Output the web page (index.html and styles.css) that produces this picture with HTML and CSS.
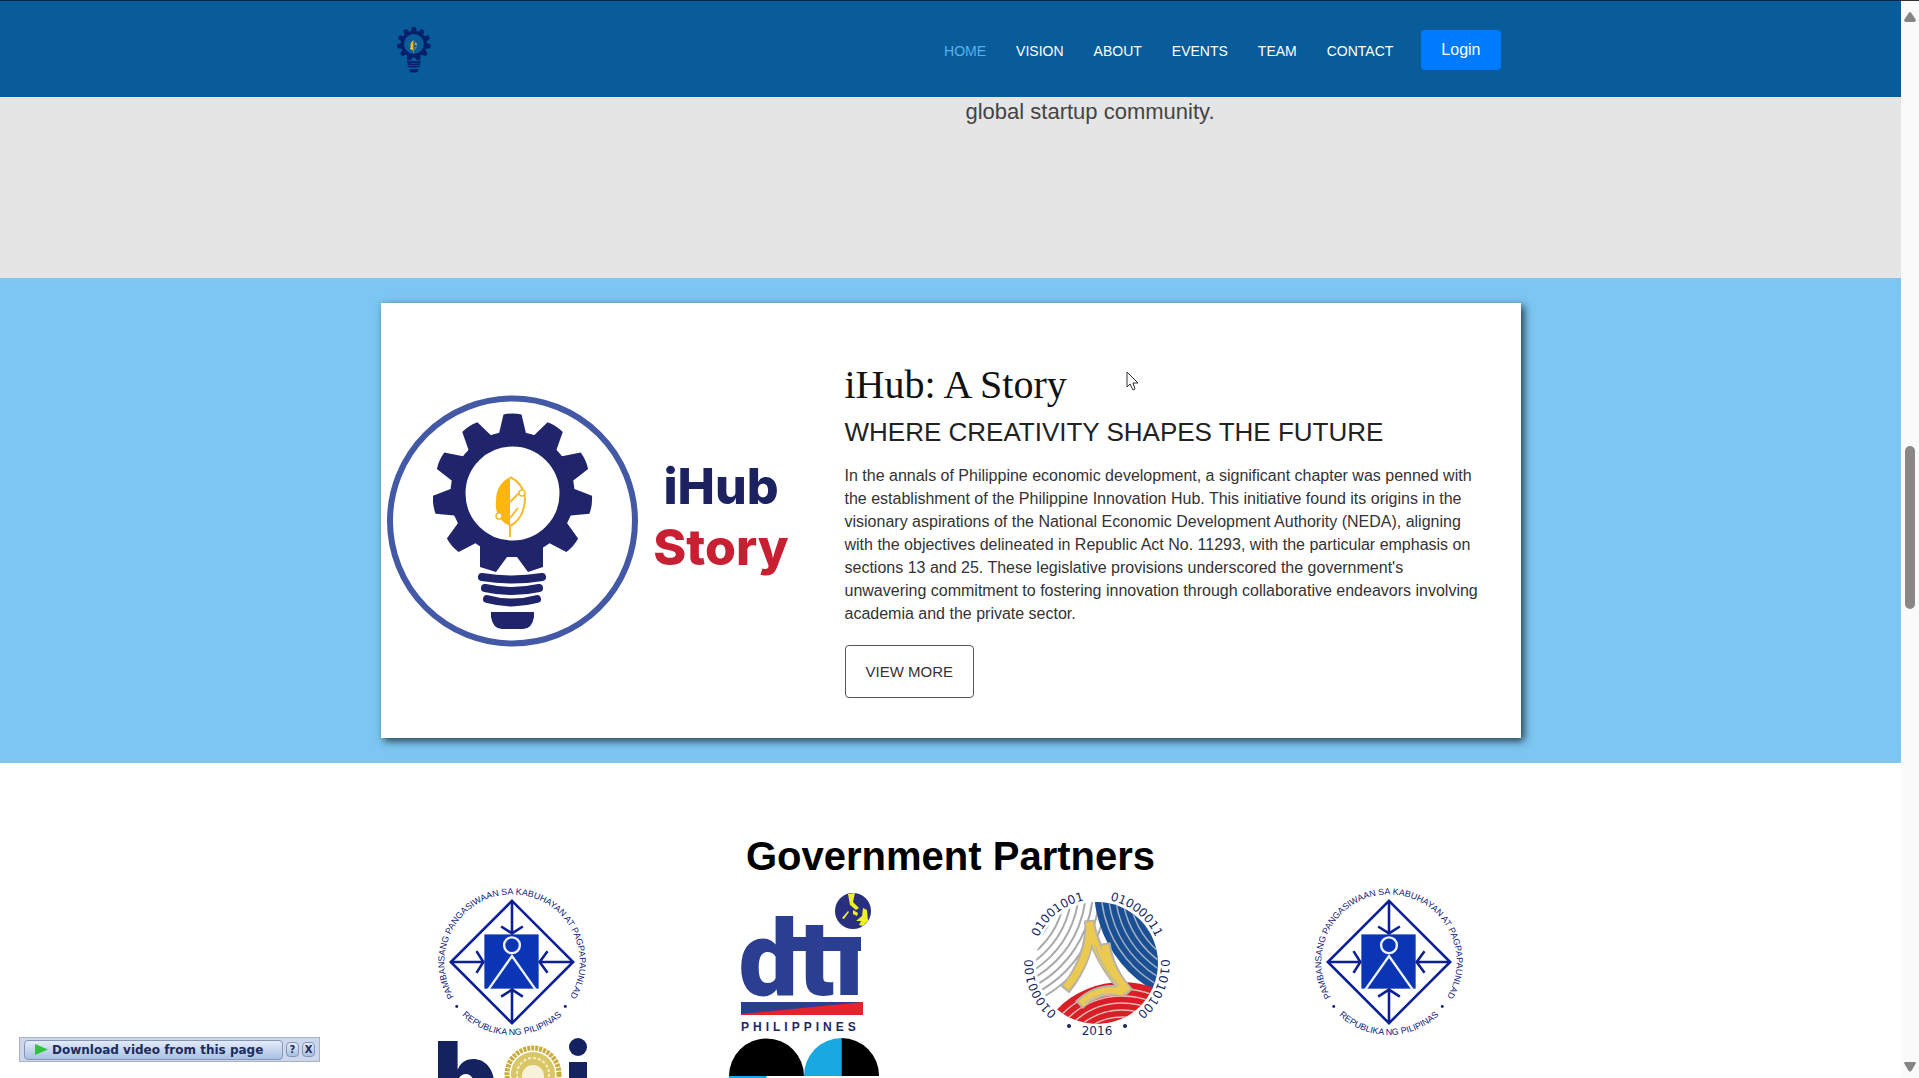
FILE: index.html
```html
<!DOCTYPE html>
<html lang="en">
<head>
<meta charset="utf-8">
<meta name="viewport" content="width=device-width, initial-scale=1">
<title>iHub</title>
<link rel="stylesheet" href="styles.css">
</head>
<body>
<svg class="defs" aria-hidden="true">
  <defs>
    <g id="tooth"><path d="M-14-58L-9-79Q0-81 9-79L14-58Z"/></g>
    <symbol id="bulb" viewBox="52 22 160 218">
      <g fill="currentColor">
        <g transform="translate(131.5 102.500)">
          <use href="#tooth"/>
          <use href="#tooth" transform="rotate(32.7)"/>
          <use href="#tooth" transform="rotate(65.5)"/>
          <use href="#tooth" transform="rotate(98.200)"/>
          <use href="#tooth" transform="rotate(130.900)"/>
          <use href="#tooth" transform="rotate(-32.7)"/>
          <use href="#tooth" transform="rotate(-65.5)"/>
          <use href="#tooth" transform="rotate(-98.200)"/>
          <use href="#tooth" transform="rotate(-130.900)"/>
          <circle r="54.500" fill="none" stroke="currentColor" stroke-width="15"/>
        </g>
        <path d="M99 148Q131 160 162 148V176L147 181L136 166H126L115 181L99 176Z"/>
        <path d="M110 221H153V226Q151 238 142 238H121Q112 238 110 226Z"/>
      </g>
      <g fill="none" stroke="currentColor" stroke-width="8" stroke-linecap="round">
        <path d="M101 186Q131 191 161 186"/>
        <path d="M104 197Q131 203 158 197"/>
        <path d="M106 208Q131 215 156 208"/>
      </g>
      <path d="M129 86Q115 93 115 110Q113 128 129 135Z" fill="#fbb70c"/>
      <path d="M129 86Q143 93 144 108Q143 128 129 135V146M129 111L139 101M129 127L137 117" fill="none" stroke="#f2bd2c" stroke-width="2"/>
      <circle cx="141" cy="102" r="3" fill="#fff" stroke="#f2bd2c" stroke-width="1.500"/>
      <circle cx="118" cy="125" r="3" fill="#fff" stroke="#f2bd2c" stroke-width="1.500"/>
    </symbol>
    <path id="ring-top" d="M-39 56.300A68.500 68.500 0 1 1 39 56.300"/>
    <path id="ring-bottom" d="M-74 0A74 74 0 0 0 74 0"/>
    <path id="ring-bits" d="M-64 0A64 64 0 0 1 64 0"/>
    <symbol id="neda" viewBox="-76 -75 152 152">
      <g class="seal-text">
        <text><textPath href="#ring-top" startOffset="50%" text-anchor="middle">PAMBANSANG PANGASIWAAN SA KABUHAYAN AT PAGPAPAUNLAD</textPath></text>
        <text><textPath href="#ring-bottom" startOffset="50%" text-anchor="middle">REPUBLIKA NG PILIPINAS</textPath></text>
      </g>
      <circle cx="-56" cy="45" r="1.500" fill="#10207a"/>
      <circle cx="54" cy="45" r="1.500" fill="#10207a"/>
      <rect x="-28" y="-28" width="55" height="55" fill="#0a35b4"/>
      <g fill="none" stroke="#0c1f94" stroke-width="2.600">
        <path d="M0-62L62 0L0 62L-62 0Z"/>
        <path d="M0-62V-28M-11-36L0-29L11-36M0 62V28M-11 35L0 28L11 35M-62 0H-28M-36-11L-29 0L-36 11M62 0H28M36-11L28 0L36 11"/>
      </g>
      <g fill="none" stroke="#eef4ff" stroke-width="2.400">
        <circle cy="-17" r="8"/><path d="M-24 28L0-6L24 28"/>
      </g>
    </symbol>
    <clipPath id="disc"><circle r="61"/></clipPath>
    <clipPath id="disc-blue"><circle cx="115" cy="-75" r="118"/></clipPath>
    <clipPath id="disc-red"><circle cx="25" cy="110" r="91"/></clipPath>
  </defs>
</svg>

<div class="page">
  <header class="header">
    <div class="header-inner">
      <a href="#" class="brand" aria-label="iHub"><svg class="brand-icon"><use href="#bulb"/></svg></a>
      <nav class="nav">
        <a href="#" class="active">HOME</a>
        <a href="#">VISION</a>
        <a href="#">ABOUT</a>
        <a href="#">EVENTS</a>
        <a href="#">TEAM</a>
        <a href="#">CONTACT</a>
      </nav>
      <button class="login" type="button">Login</button>
    </div>
  </header>

  <section class="intro">
    <div class="intro-inner"><p>global startup community.</p></div>
  </section>

  <section class="story">
    <article class="card">
      <svg class="story-art" viewBox="0 0 444 260" role="img" aria-label="iHub Story">
        <circle cx="131.500" cy="130" r="122.500" fill="none" stroke="#4459a5" stroke-width="6"/>
        <svg x="52" y="22" width="160" height="218"><use href="#bulb"/></svg>
        <text x="340" y="113" class="art-hub">iHub</text>
        <text x="340" y="174" class="art-story">Story</text>
      </svg>
      <div class="card-body">
        <h2>iHub: A Story</h2>
        <h3>WHERE CREATIVITY SHAPES THE FUTURE</h3>
        <p>In the annals of Philippine economic development, a significant chapter was penned with the establishment of the Philippine Innovation Hub. This initiative found its origins in the visionary aspirations of the National Economic Development Authority (NEDA), aligning with the objectives delineated in Republic Act No. 11293, with the particular emphasis on sections 13 and 25. These legislative provisions underscored the government's unwavering commitment to fostering innovation through collaborative endeavors involving academia and the private sector.</p>
        <button class="more" type="button">VIEW MORE</button>
      </div>
    </article>
  </section>

  <section class="partners">
    <h2>Government Partners</h2>
    <div class="logos">
      <svg><use href="#neda"/></svg>
      <svg viewBox="0 0 150 150">
        <text x="72" y="107" class="dti">dti</text>
        <rect x="100" y="22" width="40" height="27" fill="#fff"/>
        <rect x="60" y="49" width="72" height="14" fill="#2a3f92"/>
        <circle cx="124" cy="23" r="18" fill="#28307e"/>
        <path d="M119 6L126 5L124 14L130 20L127 22L121 17ZM113 30L119 23L120 24L115 31ZM124 22L129 25L128 28L124 26ZM134 20L138 22L139 33L134 38L130 37L132 33L127 33L133 28Z" fill="#eef02c"/>
        <path d="M12 114H134V127H12Z" fill="#e8222c"/>
        <path d="M12 114H134L12 126Z" fill="#2a3f92"/>
        <text x="12" y="143" class="dti-sub">PHILIPPINES</text>
      </svg>
      <svg viewBox="-75 -75 150 150">
        <g clip-path="url(#disc)" fill="none">
          <g stroke="#a9a9ad" stroke-width="2">
            <circle cx="-115" cy="-75" r="62"/><circle cx="-115" cy="-75" r="69"/><circle cx="-115" cy="-75" r="76"/><circle cx="-115" cy="-75" r="83"/><circle cx="-115" cy="-75" r="90"/><circle cx="-115" cy="-75" r="97"/><circle cx="-115" cy="-75" r="104"/><circle cx="-115" cy="-75" r="111"/><circle cx="-115" cy="-75" r="118"/><circle cx="-115" cy="-75" r="125"/>
          </g>
          <g clip-path="url(#disc-blue)">
            <rect x="-62" y="-62" width="124" height="124" fill="#1a4f94"/>
            <g stroke="#9db0c4" stroke-width="1.500">
              <circle cx="115" cy="-75" r="62"/><circle cx="115" cy="-75" r="69"/><circle cx="115" cy="-75" r="76"/><circle cx="115" cy="-75" r="83"/><circle cx="115" cy="-75" r="90"/><circle cx="115" cy="-75" r="97"/><circle cx="115" cy="-75" r="104"/><circle cx="115" cy="-75" r="111"/>
            </g>
          </g>
          <g clip-path="url(#disc-red)">
            <rect x="-62" y="-62" width="124" height="124" fill="#d81e26"/>
            <g stroke="#e9b9b4" stroke-width="1.500">
              <circle cx="25" cy="110" r="84"/><circle cx="25" cy="110" r="77"/><circle cx="25" cy="110" r="70"/><circle cx="25" cy="110" r="63"/><circle cx="25" cy="110" r="56"/>
            </g>
          </g>
          <g stroke="#b7b3a6" stroke-width="11"><path d="M-7-43Q-6-5-32 27M-8-42Q0-2 31 30M8-20Q12 8 32 30M-18 42Q0 24 28 28"/></g>
          <g stroke="#ecc94f" stroke-width="7"><path d="M-7-41Q-6-5-31 25M-8-41Q0-2 29 28M8-18Q12 8 31 28M-16 41Q0 24 27 29"/></g>
          <path d="M-2-18Q4 4 22 23M-13 40Q2 29 18 31" stroke="#c4bca2" stroke-width="1.500"/>
        </g>
        <g class="bits">
          <text transform="rotate(-39)"><textPath href="#ring-bits" startOffset="50%" text-anchor="middle">01001001</textPath></text>
          <text transform="rotate(39)"><textPath href="#ring-bits" startOffset="50%" text-anchor="middle">01000011</textPath></text>
          <text transform="rotate(114)"><textPath href="#ring-bits" startOffset="50%" text-anchor="middle">01010100</textPath></text>
          <text transform="rotate(-114)"><textPath href="#ring-bits" startOffset="50%" text-anchor="middle">01000100</textPath></text>
          <text y="72" text-anchor="middle">2016</text>
        </g>
        <circle cx="-28" cy="63" r="2" fill="#1b2450"/><circle cx="28" cy="63" r="2" fill="#1b2450"/>
      </svg>
      <svg><use href="#neda"/></svg>
      <svg viewBox="0 0 150 150">
        <text x="-4" y="76" class="boi">b</text>
        <circle cx="96" cy="36" r="26" fill="none" stroke="#c9ae3f" stroke-width="5" stroke-dasharray="3 1"/>
        <circle cx="96" cy="36" r="22" fill="#d9c667"/>
        <circle cx="96" cy="36" r="16" fill="none" stroke="#f6efc4" stroke-width="2" stroke-dasharray="3 2"/>
        <circle cx="96" cy="38" r="11" fill="#f7f3da"/>
        <circle cx="141" cy="9" r="9" fill="#14225f"/>
        <rect x="132" y="24" width="18" height="52" fill="#14225f"/>
      </svg>
      <svg viewBox="0 0 150 150">
        <path d="M0 38A37.500 37.500 0 0 1 75 38Z"/>
        <path d="M75 38A37.500 37.500 0 0 1 112.500 0V38Z" fill="#18a8e2"/>
        <path d="M112.500 0A37.500 37.500 0 0 1 150 38H112.500Z"/>
        <path d="M0 38H37.500V75A37.500 37.500 0 0 1 0 38Z" fill="#18a8e2"/>
      </svg>
    </div>
  </section>
</div>

<div class="scrollbar" aria-hidden="true">
  <svg class="arrow" viewBox="0 0 12 10"><path d="M6 0Q7 0 8 2L12 8Q12 10 10 10H2Q0 10 0 8L4 2Q5 0 6 0Z"/></svg>
  <div class="track"><div class="thumb"></div></div>
  <svg class="arrow" viewBox="0 0 12 10"><path d="M0 1Q0 0 2 0H10Q12 0 12 1L8 8Q6 11 4 8Z"/></svg>
</div>

<svg class="cursor" viewBox="0 0 14 20" aria-hidden="true"><path d="M1 1V16L4 13L7 19L9 18L7 12H12Z" fill="#fff" stroke="#333"/></svg>

<div class="grabber">
  <button type="button" class="grab-main"><svg viewBox="0 0 14 12"><path d="M0 0L14 6L0 12Z" fill="#2fc23c"/></svg>Download video from this page</button>
  <button type="button" class="grab-key">?</button>
  <button type="button" class="grab-key">X</button>
</div>
</body>
</html>
```
FILE: styles.css
```css
* { box-sizing: border-box; }
body {
  margin: 0;
  height: 100vh;
  display: flex;
  overflow: hidden;
  background: #fff;
  color: #222;
  font: 16px/23px "Liberation Sans", Arial, sans-serif;
}
h2, h3, p { margin: 0; }
button { font-family: inherit; }
.defs { position: absolute; width: 0; height: 0; }

.page { flex: 1; min-width: 0; overflow: hidden; }

.header {
  height: 97px;
  background: #085c9a;
  border-top: 1px solid #0c2348;
}
.header-inner {
  max-width: 1140px;
  height: 100%;
  margin: 0 auto;
  padding: 2px 20px 0 16px;
  display: flex;
  align-items: center;
}
.brand { margin-right: auto; color: #06206c; }
.brand-icon { display: block; width: 34px; height: 46px; }
.nav { display: flex; gap: 30px; margin-right: 28px; padding-top: 2px; }
.nav a { color: #fff; font-size: 14px; text-decoration: none; }
.nav .active { color: #5bb0ec; }
.login {
  height: 40px;
  padding: 0 20px;
  border: 0;
  border-radius: 4px;
  background: #007bff;
  color: #fff;
  font-size: 16px;
}

.intro { height: 181px; background: #e5e5e5; }
.intro-inner { max-width: 1140px; margin: 0 auto; padding-left: 585px; }
.intro p { font-size: 22px; line-height: 30px; color: #444; }

.story { padding: 25px 16px; background: #7cc6f2; }
.card {
  max-width: 1140px;
  margin: 0 auto;
  padding-right: 36px;
  display: grid;
  grid-template-columns: 444px 1fr;
  gap: 20px;
  align-items: center;
  background: #fff;
  box-shadow: 3px 3px 8px rgba(0, 0, 0, .7);
}
.story-art { display: block; width: 100%; color: #20246b; }
.art-hub, .art-story { font-family: Inter, sans-serif; font-size: 50px; font-weight: 800; text-anchor: middle; }
.art-hub { fill: #1c2260; }
.art-story { fill: #c81f33; }
.card-body { padding: 58px 0 40px; }
.card-body h2 { font: 40px/48px "Liberation Serif", "Times New Roman", serif; margin-bottom: 8px; color: #111; }
.card-body h3 { font-size: 26px; line-height: 30px; font-weight: 400; margin-bottom: 17px; }
.card-body p { margin-bottom: 20px; color: #333; }
.more {
  display: block;
  height: 53px;
  padding: 0 20px;
  border: 1px solid #555;
  border-radius: 4px;
  background: #fff;
  color: #333;
  font-size: 15px;
}

.partners { padding-top: 69px; }
.partners h2 { font-size: 40px; line-height: 48px; text-align: center; color: #000; margin-bottom: 8px; }
.logos {
  max-width: 1170px;
  margin: 0 auto;
  display: grid;
  grid-template-columns: repeat(4, 1fr);
  justify-items: center;
}
.logos svg { display: block; width: 150px; height: 150px; }
.seal-text { font: 9px "Liberation Sans", sans-serif; fill: #14207a; }
.dti { font: 900 106px Roboto, sans-serif; fill: #2a3f92; text-anchor: middle; }
.dti-sub { font: bold 12px "Liberation Sans", sans-serif; letter-spacing: 4px; fill: #1c2668; }
.bits { font: 12px "DejaVu Sans", sans-serif; fill: #1b2a63; }
.boi { font: 900 100px Inter, sans-serif; fill: #14225f; }

.scrollbar {
  width: 18px;
  padding: 11px 3px 6px;
  display: flex;
  flex-direction: column;
  align-items: center;
  border-top: 1px solid #333;
  background: #fafafa;
}
.arrow { width: 12px; height: 10px; fill: #858585; }
.track { flex: 1; padding-top: 424px; }
.thumb { width: 10px; height: 163px; border-radius: 5px; background: #8a8786; }

.cursor { position: absolute; left: 1126px; top: 371px; width: 14px; height: 20px; }

.grabber {
  position: absolute;
  left: 19px;
  bottom: 16px;
  height: 25px;
  padding: 0 4px;
  display: flex;
  align-items: center;
  gap: 3px;
  border: 1px solid #aab0c8;
  background: #cdd7ec;
}
.grabber button {
  border: 1px solid #8796b8;
  border-radius: 4px;
  background: linear-gradient(#e2ebf8, #a9c0e2);
  color: #1c2c5c;
  font-family: "DejaVu Sans", sans-serif;
  font-weight: bold;
}
.grab-main {
  width: 259px;
  height: 20px;
  padding: 0 10px;
  display: flex;
  align-items: center;
  gap: 4px;
  font-size: 12px;
  white-space: nowrap;
}
.grab-main svg { flex: none; width: 13px; height: 11px; }
.grabber .grab-key { width: 13px; height: 15px; padding: 0; font-size: 10px; line-height: 13px; }
```
